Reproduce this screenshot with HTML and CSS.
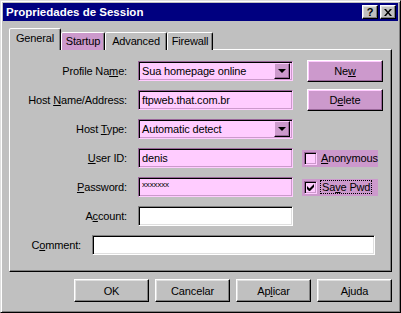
FILE: index.html
```html
<!DOCTYPE html>
<html lang="pt">
<head>
    <meta charset="UTF-8">
    <title>Propriedades de Session</title>
    <link rel="stylesheet" href="styles.css">
</head>
<body>
    <div class="window">
        <div class="titlebar">
            <span class="title">Propriedades de Session</span>
            <div class="caption">
                <button class="cap-btn help">?</button>
                <button class="cap-btn close">
                    <svg width="8" height="7" viewBox="0 0 8 7">
                        <path d="M0 0h2l2 2.5L6 0h2L5 3.5 8 7H6L4 4.5 2 7H0l3-3.5z" fill="#000"/>
                    </svg>
                </button>
            </div>
        </div>

        <div class="tabs">
            <div class="tab active t-general">General</div>
            <div class="tab pink t-startup">Startup</div>
            <div class="tab t-advanced">Advanced</div>
            <div class="tab t-firewall">Firewall</div>
        </div>

        <div class="panel">
            <div class="row">
                <label class="lbl">Profile Na<u>m</u>e:</label>
                <div class="field pinkfield combo">
                    <span class="val">Sua homepage online</span>
                    <span class="drop"></span>
                </div>
                <button class="btn pink side">Ne<u>w</u></button>
            </div>
            <div class="row">
                <label class="lbl">Host <u>N</u>ame/Address:</label>
                <div class="field pinkfield"><span class="val">ftpweb.that.com.br</span></div>
                <button class="btn pink side">D<u>e</u>lete</button>
            </div>
            <div class="row">
                <label class="lbl">Host <u>T</u>ype:</label>
                <div class="field pinkfield combo">
                    <span class="val">Automatic detect</span>
                    <span class="drop"></span>
                </div>
            </div>
            <div class="row">
                <label class="lbl"><u>U</u>ser ID:</label>
                <div class="field pinkfield"><span class="val">denis</span></div>
                <label class="check">
                    <span class="box"></span>
                    <span class="check-text"><u>A</u>nonymous</span>
                </label>
            </div>
            <div class="row">
                <label class="lbl"><u>P</u>assword:</label>
                <div class="field pinkfield"><span class="val secret">xxxxxxx</span></div>
                <label class="check">
                    <span class="box checked">
                        <svg width="7" height="7" viewBox="0 0 7 7">
                            <path d="M0 2v3l2 2h1l4-4V0L2.5 4.5z" fill="#000"/>
                        </svg>
                    </span>
                    <span class="check-text focus">Sa<u>v</u>e Pwd</span>
                </label>
            </div>
            <div class="row">
                <label class="lbl">A<u>c</u>count:</label>
                <div class="field"></div>
            </div>
            <div class="row comment-row">
                <label class="lbl short">C<u>o</u>mment:</label>
                <div class="field wide"></div>
            </div>
        </div>

        <div class="actions">
            <button class="btn action">OK</button>
            <button class="btn action">Cancelar</button>
            <button class="btn action">Ap<u>l</u>icar</button>
            <button class="btn action">Ajuda</button>
        </div>
    </div>
</body>
</html>
```

FILE: styles.css
```css
body {
    margin: 0;
    background: #c0c0c0;
    font-family: "Liberation Sans", Arial, sans-serif;
    font-size: 11px;
    letter-spacing: -0.15px;
    color: #000;
}

.window {
    width: 401px;
    height: 313px;
    box-sizing: border-box;
    background: #c0c0c0;
    border: 1px solid;
    border-color: #dfdfdf #000 #000 #dfdfdf;
    box-shadow: inset 1px 1px #fff, inset -1px -1px #808080;
    padding: 2px;
}

.titlebar {
    height: 18px;
    background: #000080;
    display: flex;
    align-items: center;
    justify-content: space-between;
    padding: 0 2px 0 3px;
}

.title {
    color: #fff;
    font-weight: bold;
    font-size: 11.5px;
    letter-spacing: 0;
}

.caption {
    display: flex;
    gap: 1px;
}

.cap-btn {
    width: 16px;
    height: 14px;
    padding: 0;
    background: #c0c0c0;
    border: 1px solid;
    border-color: #fff #000 #000 #fff;
    box-shadow: inset -1px -1px #808080, inset 1px 1px #dfdfdf;
    font-family: "Liberation Sans", Arial, sans-serif;
    font-weight: bold;
    font-size: 11px;
    line-height: 12px;
    display: flex;
    align-items: center;
    justify-content: center;
}

    .cap-btn.close {
        margin-left: 1px;
    }

/* tabs */
.tabs {
    display: flex;
    align-items: flex-end;
    height: 21px;
    margin-top: 8px;
    padding-left: 6px;
    position: relative;
    z-index: 1;
    margin-bottom: -1px;
}

.tab {
    height: 18px;
    box-sizing: border-box;
    border: 1px solid;
    border-bottom: none;
    border-color: #fff #000 transparent #fff;
    box-shadow: inset -1px 0 #808080;
    border-radius: 2px 2px 0 0;
    text-align: center;
    line-height: 17px;
    background: #c0c0c0;
}

    .tab.pink {
        background: #cc99cc;
    }

    .tab.active {
        height: 22px;
        line-height: 19px;
    }

.t-general { width: 52px; }
.t-startup { width: 44px; }
.t-advanced { width: 62px; }
.t-firewall { width: 46px; }

/* panel */
.panel {
    height: 223px;
    box-sizing: border-box;
    margin: 0 6px;
    border: 1px solid;
    border-color: #fff #000 #000 #fff;
    box-shadow: inset -1px -1px #808080;
    padding-top: 11px;
}

.row {
    display: flex;
    align-items: center;
    height: 20px;
    margin-bottom: 9px;
}

.lbl {
    width: 117px;
    text-align: right;
    margin-right: 11px;
    flex-shrink: 0;
}

    .lbl.short {
        width: 71px;
    }

.comment-row {
    margin-top: 4px;
}

.field {
    width: 155px;
    height: 20px;
    box-sizing: border-box;
    background: #fff;
    border: 1px solid;
    border-color: #808080 #fff #fff #808080;
    box-shadow: inset 1px 1px #000, inset -1px -1px #dfdfdf;
    display: flex;
    align-items: center;
    padding: 0 3px;
    flex-shrink: 0;
}

    .field.pinkfield {
        background: #ffccff;
        border-color: #996699 #ffccff #ffccff #996699;
        box-shadow: inset 1px 1px #000, inset -1px -1px #cc99cc;
    }

    .field.wide {
        width: 283px;
    }

.combo {
    justify-content: space-between;
    padding-right: 2px;
}

.val.secret {
    font-size: 8px;
    align-self: flex-start;
    margin-top: 2px;
}

.drop {
    width: 16px;
    height: 16px;
    box-sizing: border-box;
    background: #cc99cc;
    border: 1px solid;
    border-color: #ffccff #000 #000 #ffccff;
    box-shadow: inset -1px -1px #996699;
    position: relative;
}

    .drop::after {
        content: "";
        position: absolute;
        left: 3px;
        top: 5px;
        border-left: 4px solid transparent;
        border-right: 4px solid transparent;
        border-top: 4px solid #000;
    }

/* buttons */
.btn {
    font-family: "Liberation Sans", Arial, sans-serif;
    font-size: 11px;
    letter-spacing: -0.15px;
    color: #000;
    background: #c0c0c0;
    border: 1px solid;
    border-color: #fff #000 #000 #fff;
    box-shadow: inset -1px -1px #808080, inset 1px 1px #dfdfdf;
    padding: 0;
}

    .btn.pink {
        background: #cc99cc;
        box-shadow: inset -1px -1px #996699, inset 1px 1px #ffccff;
    }

    .btn.side {
        width: 76px;
        height: 22px;
        margin-left: 14px;
    }

.check {
    display: flex;
    align-items: center;
    margin-left: 9px;
    width: 76px;
    height: 17px;
    background: #cc99cc;
    padding-left: 2px;
    box-sizing: border-box;
}

.box {
    width: 13px;
    height: 13px;
    box-sizing: border-box;
    background: #ffccff;
    border: 1px solid;
    border-color: #996699 #ffccff #ffccff #996699;
    box-shadow: inset 1px 1px #000, inset -1px -1px #cc99cc;
    display: flex;
    align-items: center;
    justify-content: center;
    margin-right: 4px;
}

.check-text.focus {
    outline: 1px dotted #000;
    padding: 0 1px;
}

.actions {
    display: flex;
    justify-content: flex-end;
    gap: 6px;
    margin-top: 7px;
    padding-right: 6px;
}

.btn.action {
    width: 75px;
    height: 23px;
}
```
